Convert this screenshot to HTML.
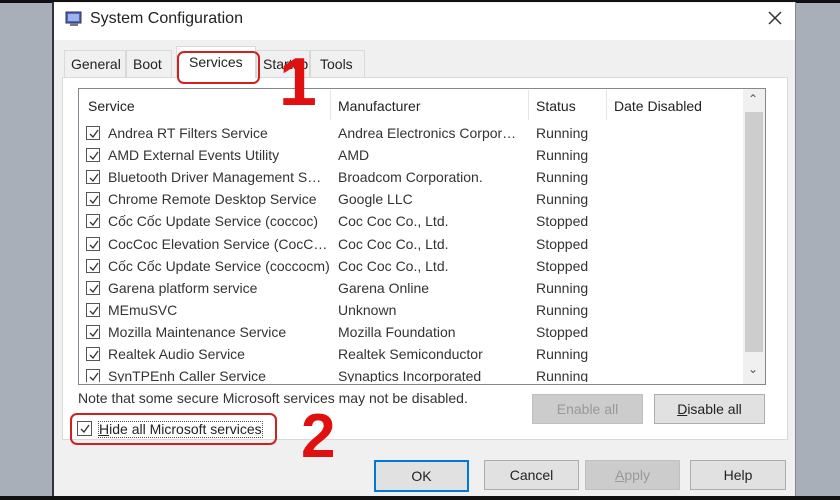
<!DOCTYPE html><html><head><style>
body{margin:0;width:840px;height:500px;overflow:hidden;background:#a9afb9;font-family:"Liberation Sans",sans-serif;font-size:14px;color:#222;position:relative}
.a{position:absolute}
.btn{position:absolute;background:#e1e1e1;border:1px solid #adadad;text-align:center;box-sizing:border-box;line-height:28px;font-size:14px}
.row{position:absolute;left:86px;height:22px;width:640px;font-size:14px;color:#333}
.row span{position:absolute;top:0}
.cb{position:absolute;left:0;top:1px;width:14px;height:14px;border:1px solid #555;box-sizing:border-box;background:#fff}
.cb svg{position:absolute;left:1px;top:1px}
.tab{position:absolute;top:50px;height:27px;background:#f0f0f0;border:1px solid #d9d9d9;border-bottom:none;line-height:27px;font-size:14px;padding:0 6px;box-sizing:border-box}
</style></head><body>
<div class="a" style="left:0;top:0;width:840px;height:3px;background:#111"></div>
<div class="a" style="left:0;top:496px;width:840px;height:4px;background:#111"></div>
<div class="a" style="left:52px;top:2px;width:744px;height:494px;background:#f0f0f0;border-left:2px solid #333;border-right:1px solid #888;box-sizing:border-box"></div>
<div class="a" style="left:54px;top:3px;width:741px;height:37px;background:#fff"></div>
<svg class="a" style="left:64px;top:10px" width="20" height="18"><rect x="2" y="2" width="15" height="11" fill="#4a66c8" stroke="#334" /><rect x="4" y="4" width="11" height="7" fill="#9fb4ee"/><rect x="6" y="13" width="8" height="3" fill="#778"/></svg>
<div class="a" style="left:90px;top:10px;font-size:16px;color:#222">System Configuration</div>
<svg class="a" style="left:768px;top:11px" width="14" height="14"><path d="M1 1L13 13M13 1L1 13" stroke="#333" stroke-width="1.5"/></svg>
<div class="a" style="left:62px;top:77px;width:726px;height:363px;background:#fff;border:1px solid #d9d9d9;box-sizing:border-box"></div>
<div class="tab" style="left:64px;width:62px">General</div>
<div class="tab" style="left:126px;width:46px">Boot</div>
<div class="tab" style="left:256px;width:54px">Startup</div>
<div class="tab" style="left:310px;width:55px;padding-left:9px">Tools</div>
<div class="tab" style="left:176px;top:46px;height:32px;width:80px;background:#fff;line-height:30px;padding-left:12px">Services</div>
<div class="a" style="left:177px;top:51px;width:83px;height:33px;border:2px solid #d21f1f;border-radius:7px;box-sizing:border-box"></div>
<div class="a" style="left:78px;top:88px;width:688px;height:297px;border:1px solid #828790;box-sizing:border-box;background:#fff"></div>
<div class="a" style="left:88px;top:98px">Service</div>
<div class="a" style="left:330px;top:90px;width:1px;height:30px;background:#e5e5e5"></div>
<div class="a" style="left:338px;top:98px">Manufacturer</div>
<div class="a" style="left:528px;top:90px;width:1px;height:30px;background:#e5e5e5"></div>
<div class="a" style="left:536px;top:98px">Status</div>
<div class="a" style="left:606px;top:90px;width:1px;height:30px;background:#e5e5e5"></div>
<div class="a" style="left:614px;top:98px">Date Disabled</div>
<div class="a" style="left:743px;top:89px;width:22px;height:295px;background:#f0f0f0"></div>
<div class="a" style="left:745px;top:112px;width:18px;height:240px;background:#cdcdcd"></div>
<div class="a" style="left:748px;top:92px;font-size:12px;color:#555">⌃</div>
<div class="a" style="left:748px;top:362px;font-size:12px;color:#555">⌄</div>
<div id="rows"></div>
<div class="a" style="left:78px;top:390px;font-size:14px;color:#333">Note that some secure Microsoft services may not be disabled.</div>
<div class="btn" style="left:532px;top:394px;width:111px;color:#999;background:#ccc;border-color:#bfbfbf">Enable all</div>
<div class="btn" style="left:654px;top:394px;width:111px"><u>D</u>isable all</div>
<div class="a" style="left:77px;top:420px"><div class="cb" style="width:15px;height:15px"><svg width="12" height="12"><path d="M2 6l3 3 5-7" fill="none" stroke="#333" stroke-width="1.3"/></svg></div></div>
<div class="a" style="left:98px;top:421px;font-size:14px;border:1px dotted #555;line-height:15px"><u>H</u>ide all Microsoft services</div>
<div class="a" style="left:70px;top:413px;width:207px;height:32px;border:2px solid #d21f1f;border-radius:7px;box-sizing:border-box"></div>
<div class="btn" style="left:374px;top:460px;width:95px;border:2px solid #0078d7">OK</div>
<div class="btn" style="left:484px;top:460px;width:95px">Cancel</div>
<div class="btn" style="left:585px;top:460px;width:95px;color:#999;background:#ccc;border-color:#bfbfbf"><u>A</u>pply</div>
<div class="btn" style="left:690px;top:460px;width:96px">Help</div>
<div class="a" style="left:279px;top:48px;font-size:68px;font-weight:bold;color:#e01010;line-height:68px;z-index:5">1</div>
<div class="a" style="left:301px;top:406px;font-size:62px;font-weight:bold;color:#e01010;line-height:62px;z-index:5">2</div>
<script>
var d=[["Andrea RT Filters Service","Andrea Electronics Corpor…","Running"],["AMD External Events Utility","AMD","Running"],["Bluetooth Driver Management S…","Broadcom Corporation.","Running"],["Chrome Remote Desktop Service","Google LLC","Running"],["Cốc Cốc Update Service (coccoc)","Coc Coc Co., Ltd.","Stopped"],["CocCoc Elevation Service (CocC…","Coc Coc Co., Ltd.","Stopped"],["Cốc Cốc Update Service (coccocm)","Coc Coc Co., Ltd.","Stopped"],["Garena platform service","Garena Online","Running"],["MEmuSVC","Unknown","Running"],["Mozilla Maintenance Service","Mozilla Foundation","Stopped"],["Realtek Audio Service","Realtek Semiconductor","Running"],["SynTPEnh Caller Service","Synaptics Incorporated","Running"]];
var h="";d.forEach(function(r,i){var t=125+i*22.1;var clip=i==11?"height:14px;overflow:hidden;":"";h+='<div class="row" style="top:'+t+'px;'+clip+'"><div class="cb"><svg width="12" height="12"><path d="M2 6l3 3 5-7" fill="none" stroke="#333" stroke-width="1.3"/></svg></div><span style="left:22px">'+r[0]+'</span><span style="left:252px">'+r[1]+'</span><span style="left:450px">'+r[2]+'</span></div>'});
document.getElementById("rows").innerHTML=h;
</script>
</body></html>
